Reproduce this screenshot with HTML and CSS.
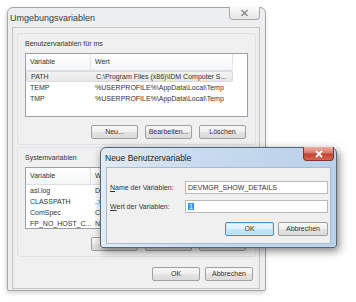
FILE: index.html
```html
<!DOCTYPE html>
<html lang="de">
<head>
  <meta charset="UTF-8">
  <meta name="viewport" content="width=device-width, initial-scale=1.0">
  <title>Umgebungsvariablen</title>
  <link rel="stylesheet" href="styles.css">
</head>
<body>
  <div class="window">
    <div class="titlebar">
      <span class="title">Umgebungsvariablen</span>
      <span class="close-btn">
        <svg width="9" height="8" viewBox="0 0 9 8"><path d="M1.5 1 L7.5 7 M7.5 1 L1.5 7" stroke="#8c8c8c" stroke-width="1.6" fill="none"/></svg>
      </span>
    </div>
    <div class="client">
      <div class="group group-user">
        <div class="group-label">Benutzervariablen für ms</div>
        <div class="listview list-user">
          <div class="lv-head"><span class="col-var">Variable</span><span class="col-val">Wert</span></div>
          <div class="lv-row selected"><span class="col-var">PATH</span><span class="col-val">C:\Program Files (x86)\IDM Computer S...</span></div>
          <div class="lv-row"><span class="col-var">TEMP</span><span class="col-val">%USERPROFILE%\AppData\Local\Temp</span></div>
          <div class="lv-row"><span class="col-var">TMP</span><span class="col-val">%USERPROFILE%\AppData\Local\Temp</span></div>
        </div>
        <div class="btn-row">
          <button class="btn">Neu...</button>
          <button class="btn">Bearbeiten...</button>
          <button class="btn">Löschen</button>
        </div>
      </div>
      <div class="group group-sys">
        <div class="group-label">Systemvariablen</div>
        <div class="listview list-sys">
          <div class="lv-head"><span class="col-var">Variable</span><span class="col-val">Wert</span></div>
          <div class="lv-row"><span class="col-var">asl.log</span><span class="col-val">Destination=file</span></div>
          <div class="lv-row"><span class="col-var">CLASSPATH</span><span class="col-val">.;C:\Program Files\Java</span></div>
          <div class="lv-row"><span class="col-var">ComSpec</span><span class="col-val">C:\Windows\system32\cmd.exe</span></div>
          <div class="lv-row"><span class="col-var">FP_NO_HOST_C...</span><span class="col-val">NO</span></div>
        </div>
        <div class="btn-row">
          <button class="btn">Neu...</button>
          <button class="btn">Bearbeiten...</button>
          <button class="btn">Löschen</button>
        </div>
      </div>
      <div class="btn-row footer">
        <button class="btn btn-wide">OK</button>
        <button class="btn btn-wide">Abbrechen</button>
      </div>
    </div>
  </div>

  <div class="dialog">
    <div class="dlg-titlebar">
      <span class="dlg-title">Neue Benutzervariable</span>
      <span class="dlg-close">
        <svg width="10" height="8" viewBox="0 0 10 8"><path d="M2 1 L8 7 M8 1 L2 7" stroke="#ffffff" stroke-width="1.8" fill="none"/></svg>
      </span>
    </div>
    <div class="dlg-client">
      <div class="field">
        <span class="field-label">Name der Variablen:</span>
        <div class="textbox">DEVMGR_SHOW_DETAILS</div>
      </div>
      <div class="field">
        <span class="field-label">Wert der Variablen:</span>
        <div class="textbox"><span class="sel">1</span></div>
      </div>
      <div class="dlg-buttons">
        <button class="btn btn-default">OK</button>
        <button class="btn btn-cancel">Abbrechen</button>
      </div>
    </div>
  </div>
</body>
</html>
```

FILE: styles.css
```css
body {
  margin: 0;
  padding: 7px;
  background: #fff;
  font-family: "Liberation Sans", Arial, sans-serif;
  font-size: 7px;
  color: #333;
  position: relative;
  width: 356px;
  height: 302px;
  box-sizing: border-box;
  overflow: hidden;
}

/* outer window */
.window {
  width: 259px;
  height: 284px;
  box-sizing: border-box;
  border: 1px solid #a6a6a6;
  border-radius: 6px 6px 2px 2px;
  background: #eceef0;
  padding-bottom: 1px;
  box-shadow: -1px 2px 4px rgba(0,0,0,0.18);
}
.titlebar {
  height: 19px;
  display: flex;
  justify-content: space-between;
  align-items: center;
}
.title {
  font-size: 9px;
  padding-left: 2px;
  color: #3a3a3a;
}
.close-btn {
  align-self: flex-start;
  width: 31px;
  height: 13px;
  box-sizing: border-box;
  margin-right: 5px;
  margin-top: -1px;
  border: 1px solid #a9a9a9;
  border-top: none;
  border-radius: 0 0 4px 4px;
  background: linear-gradient(#fafafa, #e6e6e6);
  display: flex;
  align-items: center;
  justify-content: center;
}
.client {
  height: 262px;
  box-sizing: border-box;
  margin: 0 5px 0 4px;
  background: #f0f0f0;
  border: 1px solid #c6c6c6;
  display: flex;
  flex-direction: column;
}

/* group boxes */
.group {
  box-sizing: border-box;
  width: 239px;
  margin-left: 4px;
  border: 1px solid #dfe3e7;
  border-radius: 3px;
  padding: 5px 7px 5px 7px;
}
.group-user {
  margin-top: 5px;
  height: 112px;
}
.group-sys {
  margin-top: 2px;
  height: 110px;
}
.group-label {
  line-height: 10px;
  height: 10px;
}

/* list views */
.listview {
  margin-top: 4px;
  background: #fff;
  border: 1px solid #9a9fa6;
  box-sizing: border-box;
  overflow: hidden;
}
.list-user { height: 64px; }
.list-sys { height: 62px; }
.lv-head,
.lv-row {
  display: flex;
  white-space: nowrap;
}
.lv-head {
  height: 17px;
  line-height: 16px;
  width: 207px;
  box-sizing: border-box;
  background: linear-gradient(#ffffff, #f4f5f6);
  border-bottom: 1px solid #dcdfe3;
  border-right: 1px solid #e3e5e8;
}
.lv-head .col-var {
  border-right: 1px solid #e3e5e8;
}
.lv-row {
  height: 11px;
  line-height: 11px;
}
.lv-row.selected {
  width: 207px;
  box-sizing: border-box;
  background: linear-gradient(#f4f4f4, #e7e7e7);
  border: 1px solid #dadada;
  border-radius: 2px;
  line-height: 9px;
}
.col-var {
  width: 65px;
  box-sizing: border-box;
  padding-left: 4px;
  overflow: hidden;
  flex-shrink: 0;
}
.col-val {
  padding-left: 4px;
  overflow: hidden;
}

/* buttons */
.btn-row {
  display: flex;
  justify-content: flex-end;
  gap: 7px;
  margin-top: 8px;
  margin-right: 2px;
}
.btn {
  width: 47px;
  height: 14px;
  padding: 0;
  box-sizing: border-box;
  font-family: "Liberation Sans", Arial, sans-serif;
  font-size: 7px;
  color: #333;
  border: 1px solid #a0a0a0;
  border-radius: 2px;
  background: linear-gradient(#f7f7f7 0%, #efefef 50%, #e3e3e3 51%, #dbdbdb 100%);
  line-height: 12px;
}
.footer {
  margin-top: 10px;
  margin-right: 6px;
  gap: 5px;
}
.btn-wide {
  width: 48px;
}

/* overlay dialog */
.dialog {
  position: absolute;
  left: 100px;
  top: 147px;
  width: 237px;
  height: 101px;
  box-sizing: border-box;
  border: 1px solid #56677a;
  border-radius: 6px 6px 3px 3px;
  background: linear-gradient(90deg, #e3ebf3 0%, #c9dbee 40%, #b9d1ea 100%);
  padding: 0 5px 3px 5px;
  box-shadow: 2px 3px 8px rgba(0,0,0,0.5);
}
.dlg-titlebar {
  height: 19px;
  margin: 0 -5px;
  display: flex;
  justify-content: space-between;
  align-items: center;
}
.dlg-title {
  font-size: 8.5px;
  padding-left: 4px;
  color: #222;
}
.dlg-close {
  align-self: flex-start;
  width: 31px;
  height: 14px;
  box-sizing: border-box;
  margin-right: 2px;
  margin-top: -1px;
  border: 1px solid #7a3a30;
  border-top: none;
  border-radius: 0 0 4px 4px;
  background: linear-gradient(#eab1a6 0%, #d9796a 45%, #c2422f 55%, #d8654f 100%);
  display: flex;
  align-items: center;
  justify-content: center;
}
.dlg-client {
  background: #f0f0f0;
  border: 1px solid #a7bcd2;
  padding: 13px 2px 7px 3px;
}
.field {
  display: flex;
  align-items: center;
  margin-bottom: 6px;
}
.field-label {
  width: 75px;
  flex-shrink: 0;
  white-space: nowrap;
}
.field-label::first-letter {
  text-decoration: underline;
}
.textbox {
  width: 143px;
  height: 13px;
  box-sizing: border-box;
  border: 1px solid #b5b9c0;
  background: #fff;
  padding-left: 2px;
  line-height: 11px;
  white-space: nowrap;
}
.sel {
  background: #3399ff;
  color: #fff;
  padding: 0 1px;
}
.dlg-buttons {
  display: flex;
  justify-content: flex-end;
  gap: 4px;
  margin-top: 9px;
}
.btn-default {
  width: 49px;
  border-color: #4a8fc4;
  background: linear-gradient(#eef7fd 0%, #dcf0fc 50%, #c6e6fb 51%, #b8dcf4 100%);
  box-shadow: inset 0 0 0 1px #c8e6fa;
}
.btn-cancel {
  width: 50px;
}
```
